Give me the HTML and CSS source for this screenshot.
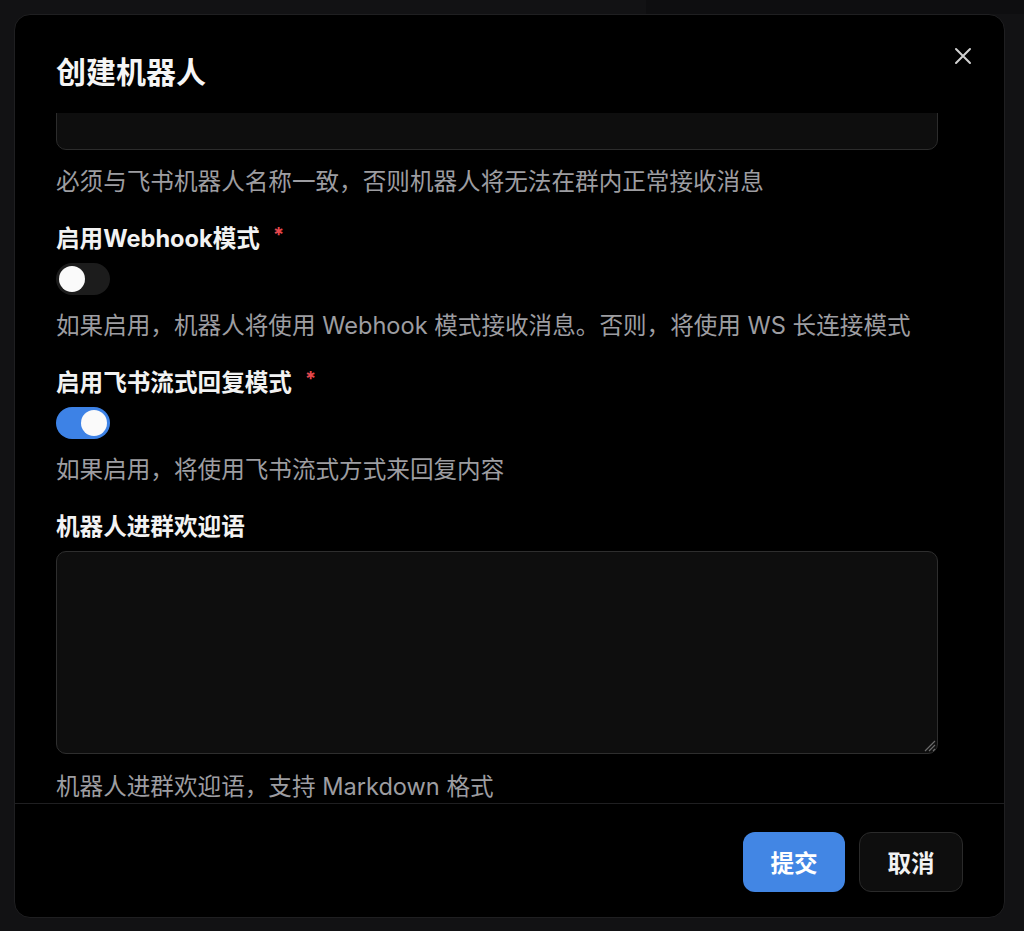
FILE: index.html
```html
<!DOCTYPE html>
<html lang="zh-CN">
<head>
<meta charset="utf-8">
<title>创建机器人</title>
<link rel="stylesheet" href="styles.css">
</head>
<body>
<div class="topstrip"><div class="strip-left"></div><div class="strip-right"></div></div>
<div class="modal">
  <div class="modal-header">
    <h2 class="modal-title">创建机器人</h2>
    <button class="close-btn" aria-label="关闭">
      <svg width="18" height="18" viewBox="0 0 18 18"><path d="M2 2 L16 16 M16 2 L2 16" stroke="#d0d0d0" stroke-width="2" stroke-linecap="round" fill="none"/></svg>
    </button>
  </div>
  <div class="modal-body">
    <div class="form">
      <div class="form-item">
        <div class="input scrolled"></div>
        <div class="help">必须与飞书机器人名称一致，否则机器人将无法在群内正常接收消息</div>
      </div>
      <div class="form-item">
        <label class="label">启用Webhook模式<span class="req">*</span></label>
        <div class="switch"><span class="knob"></span></div>
        <div class="help">如果启用，机器人将使用 Webhook 模式接收消息。否则，将使用 WS 长连接模式</div>
      </div>
      <div class="form-item">
        <label class="label">启用飞书流式回复模式<span class="req">*</span></label>
        <div class="switch on"><span class="knob"></span></div>
        <div class="help">如果启用，将使用飞书流式方式来回复内容</div>
      </div>
      <div class="form-item">
        <label class="label">机器人进群欢迎语</label>
        <div class="textarea">
          <svg class="grip" width="14" height="14" viewBox="0 0 14 14"><path d="M13 3 L3 13 M13 7 L7 13 M13 11 L11 13" stroke="#6a6a6a" stroke-width="1.2" fill="none"/></svg>
        </div>
        <div class="help">机器人进群欢迎语，支持 Markdown 格式</div>
      </div>
    </div>
  </div>
  <div class="modal-footer">
    <button class="btn primary">提交</button>
    <button class="btn secondary">取消</button>
  </div>
</div>
</body>
</html>
```

FILE: styles.css
```css
* { box-sizing: border-box; }
html, body {
  margin: 0;
  padding: 0;
  width: 1024px;
  height: 931px;
  overflow: hidden;
  background: #121214;
  font-family: Inter, "Noto Sans CJK SC", sans-serif;
}
.topstrip {
  display: flex;
  height: 14px;
}
.strip-left { width: 646px; background: #121214; }
.strip-right { flex: 1; background: #0e0e10; }
.modal {
  position: relative;
  margin-left: 14px;
  width: 991px;
  height: 904px;
  background: #000;
  border: 1px solid #1f1f21;
  border-radius: 16px;
  display: flex;
  flex-direction: column;
  overflow: hidden;
}
.modal-header {
  height: 98px;
  padding: 37px 41px 0 41px;
  flex: none;
}
.modal-title {
  margin: 0;
  font-size: 30px;
  line-height: 40px;
  font-weight: 700;
  color: #f5f5f5;
}
.close-btn {
  position: absolute;
  top: 32px;
  right: 32px;
  width: 18px;
  height: 18px;
  padding: 0;
  border: 0;
  background: transparent;
  display: flex;
}
.modal-body {
  height: 690px;
  flex: none;
  overflow: hidden;
  padding-left: 41px;
}
.form {
  width: 882px;
  display: flex;
  flex-direction: column;
  gap: 23px;
}
.form-item {
  display: flex;
  flex-direction: column;
  align-items: flex-start;
}
.label {
  font-size: 23.6px;
  line-height: 34px;
  font-weight: 700;
  color: #f2f2f2;
  margin-bottom: 7px;
  display: flex;
  align-items: flex-start;
}
.req {
  color: #e5484d;
  font-size: 20px;
  line-height: 20px;
  margin-left: 13px;
  margin-top: 3px;
  font-weight: 700;
}
.input {
  width: 882px;
  height: 54px;
  background: #0e0e0e;
  border: 1px solid #2c2c2c;
  border-radius: 10px;
}
.input.scrolled {
  margin-top: -17px;
}
.help {
  margin-top: 15px;
  font-size: 23.6px;
  line-height: 34px;
  color: #9d9da1;
}
.switch + .help { margin-top: 14px; }
.switch {
  width: 54px;
  height: 32px;
  border-radius: 16px;
  background: #1c1c1c;
  padding: 3px;
  display: flex;
}
.knob {
  width: 26px;
  height: 26px;
  border-radius: 50%;
  background: #fafafa;
}
.switch.on {
  background: #3d82e6;
  justify-content: flex-end;
}
.textarea {
  width: 882px;
  height: 203px;
  background: #0e0e0e;
  border: 1px solid #2e2e2e;
  border-radius: 10px;
  display: flex;
  align-items: flex-end;
  justify-content: flex-end;
  padding: 1px;
}
.textarea + .help { margin-top: 16px; }
.modal-footer {
  flex: 1;
  border-top: 1px solid #1f1f21;
  padding: 28px 41px 0 0;
  display: flex;
  justify-content: flex-end;
  align-items: flex-start;
  gap: 14px;
}
.btn {
  height: 60px;
  border-radius: 12px;
  font-family: Inter, "Noto Sans CJK SC", sans-serif;
  font-size: 23.6px;
  font-weight: 700;
  padding: 0;
}
.btn.primary {
  width: 102px;
  background: #4286e4;
  border: 0;
  color: #fff;
}
.btn.secondary {
  width: 104px;
  background: #0e0e0e;
  border: 1px solid #2a2a2a;
  color: #f2f2f2;
}
```
